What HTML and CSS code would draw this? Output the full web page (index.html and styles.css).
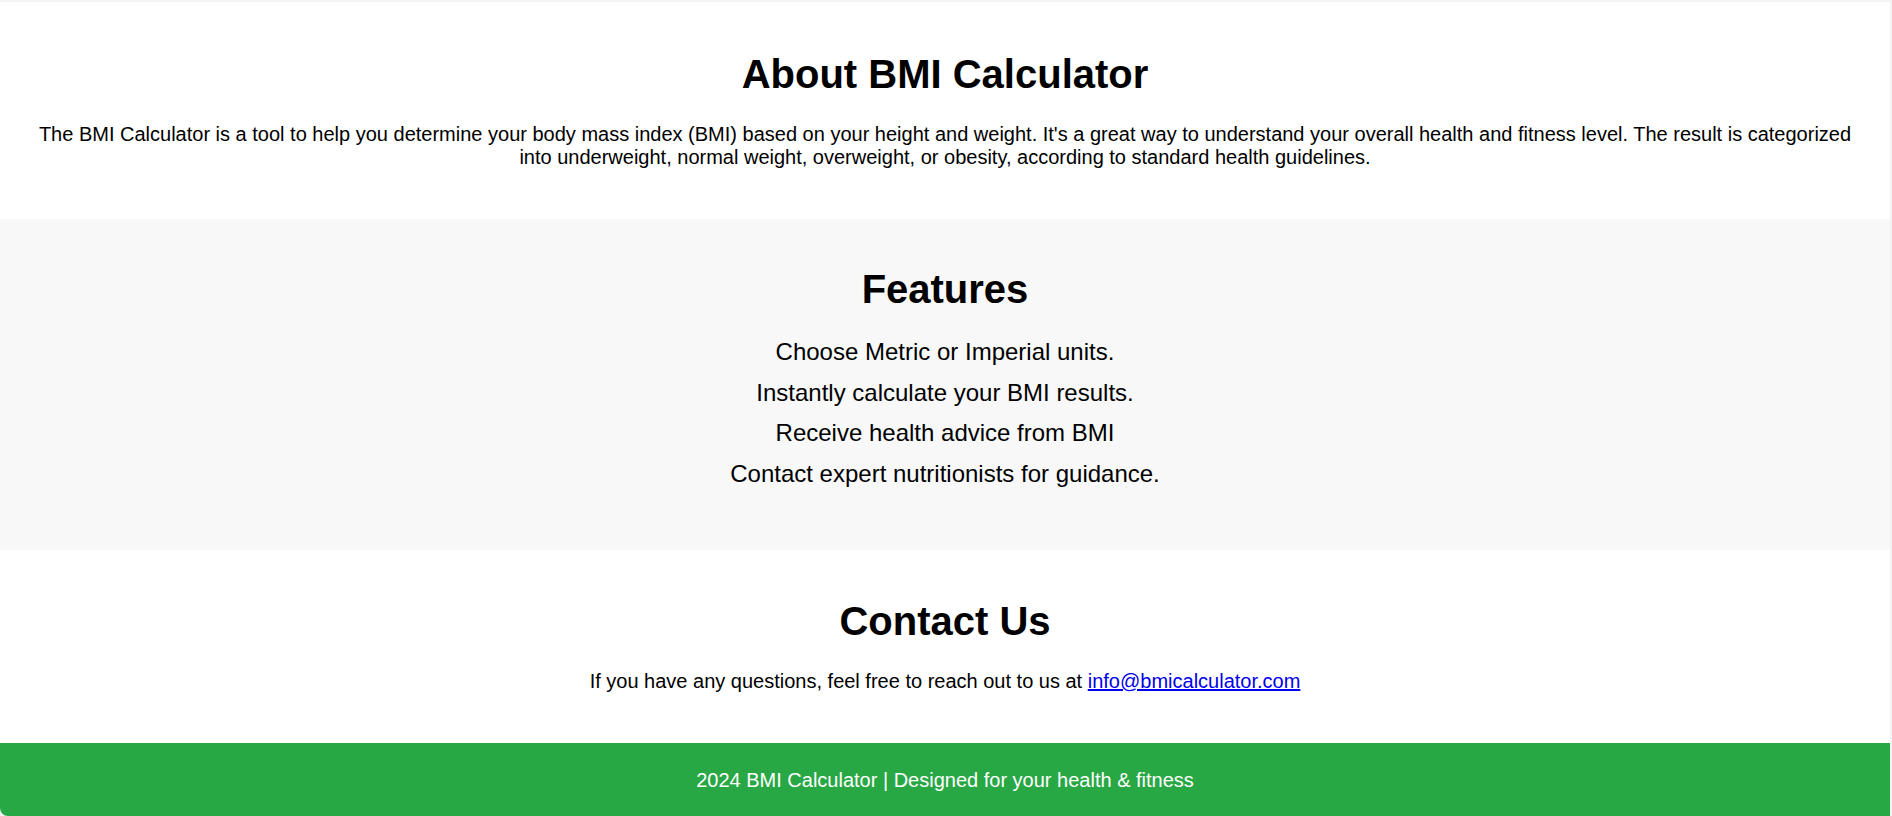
FILE: index.html
```html
<!DOCTYPE html>
<html lang="en">
<head>
<meta charset="utf-8">
<title>BMI Calculator</title>
<link rel="stylesheet" href="styles.css">
</head>
<body>
<div class="page">
  <section class="section about">
    <h2 class="title">About BMI Calculator</h2>
    <p class="text">The BMI Calculator is a tool to help you determine your body mass index (BMI) based on your height and weight. It's a great way to understand your overall health and fitness level. The result is categorized into underweight, normal weight, overweight, or obesity, according to standard health guidelines.</p>
  </section>
  <section class="section features">
    <h2 class="title">Features</h2>
    <ul class="feature-list">
      <li>Choose Metric or Imperial units.</li>
      <li>Instantly calculate your BMI results.</li>
      <li>Receive health advice from BMI</li>
      <li>Contact expert nutritionists for guidance.</li>
    </ul>
  </section>
  <section class="section contact">
    <h2 class="title">Contact Us</h2>
    <p class="text">If you have any questions, feel free to reach out to us at <a class="mail" href="mailto:info@bmicalculator.com">info@bmicalculator.com</a></p>
  </section>
  <footer class="footer">2024 BMI Calculator | Designed for your health &amp; fitness</footer>
</div>
</body>
</html>
```
FILE: styles.css
```css
html, body {
  margin: 0;
  padding: 0;
}
body {
  background: #f3f3f3;
  font-family: "Liberation Sans", Arial, sans-serif;
  color: #000;
  height: 816px;
  overflow: hidden;
}
.page {
  width: 1890px;
  margin-top: 2px;
  background: #fff;
  border-bottom-left-radius: 8px;
  overflow: hidden;
}
.section {
  text-align: center;
  padding: 48px 30px 50px;
}
.about {
  padding-top: 50px;
  background: #fff;
}
.features {
  background: #f8f8f8;
  padding-bottom: 56px;
}
.contact {
  background: #fff;
  padding-top: 49px;
}
.title {
  font-size: 40px;
  font-weight: bold;
  margin: 0 0 26px;
}
.features .title {
  margin-bottom: 20px;
}
.contact .title {
  margin-bottom: 26px;
}
.text {
  font-size: 20px;
  margin: 0;
}
.feature-list {
  list-style: none;
  margin: 0;
  padding: 0;
  font-size: 24px;
  line-height: 40.5px;
}
.mail {
  color: #0000ee;
  text-decoration: underline;
}
.footer {
  background: #28a745;
  color: #fff;
  text-align: center;
  font-size: 20px;
  padding: 26px 20px 24px;
}
```
